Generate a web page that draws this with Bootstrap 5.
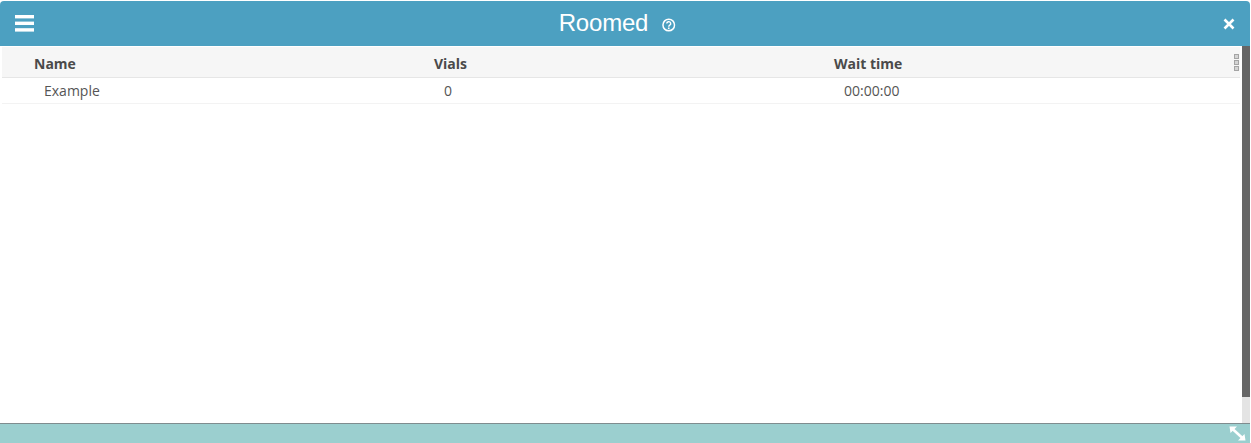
<!DOCTYPE html>
<html lang="en">
<head>
    <meta charset="UTF-8">
    <meta name="viewport" content="width=device-width, initial-scale=1.0">
    <title>Roomed</title>
    <link href="https://cdn.jsdelivr.net/npm/bootstrap@5.3.0/dist/css/bootstrap.min.css" rel="stylesheet">
    <style>
        html, body { height: 100%; overflow: hidden; background: #fff; }
        .win-frame { height: 443px; width: 1250px; }
        .win-head {
            height: 45px;
            margin-top: 1px;
            background: #4ca0c1;
            border-radius: 4px 4px 0 0;
            color: #fff;
            padding: 0 15px 0 15px;
        }
        .win-title {
            font-family: "Liberation Sans", Arial, sans-serif;
            font-size: 24px;
            letter-spacing: -0.2px;
            line-height: 44px;
        }
        .title-group { padding-right: 16px; gap: 13px; }
        .win-main { min-height: 0; }
        .grid-area { padding: 1px 2px 0 2px; font-family: "Open Sans", sans-serif; font-size: 14px; color: #444; }
        .grid-table { table-layout: fixed; width: 1238px; margin: 0; border-collapse: collapse; }
        .grid-table th {
            background: #f6f6f6;
            height: 30px;
            font-weight: 700;
            color: #4a4a4a;
            padding: 4px 0 0 32px;
            border-bottom: 1px solid #e6e6e6;
            position: relative;
        }
        .grid-table td {
            height: 26px;
            padding: 0 0 0 42px;
            color: #555;
            border-bottom: 1px solid #f3f3f3;
        }
        .grip-dots { position: absolute; right: 1px; top: 7px; display: flex; flex-direction: column; gap: 1px; }
        .grip-dots i { display: block; width: 5px; height: 5px; background: #d4d4d4; border: 1px solid #a4a4a4; }
        .scroll-rail { width: 8px; background: #e4e4e4; }
        .scroll-thumb { height: 351px; background: #666; }
        .win-foot {
            height: 20px;
            background: #9bcfcf;
            border-top: 1px solid #7f8c8f;
            padding-right: 4px;
        }
    </style>
</head>
<body>
    <div class="win-frame d-flex flex-column">
        <div class="win-head d-flex align-items-center justify-content-between position-relative">
            <svg width="19" height="17" viewBox="0 0 19 17" aria-hidden="true">
                <rect x="0" y="0" width="19" height="3.4" fill="#fff"/>
                <rect x="0" y="6.6" width="19" height="3.4" fill="#fff"/>
                <rect x="0" y="13.2" width="19" height="3.4" fill="#fff"/>
            </svg>
            <div class="title-group position-absolute top-0 start-50 translate-middle-x d-flex align-items-center">
                <span class="win-title">Roomed</span>
                <svg width="14" height="14" viewBox="0 0 14 14" aria-hidden="true" class="mt-1">
                    <circle cx="7" cy="7" r="5.8" fill="none" stroke="#fff" stroke-width="1.5"/>
                    <path d="M5 5.6a2 1.9 0 1 1 3 1.6c-.7.4-1 .7-1 1.5" fill="none" stroke="#fff" stroke-width="1.4"/>
                    <rect x="6.2" y="9.5" width="1.6" height="1.6" fill="#fff"/>
                </svg>
            </div>
            <svg width="12" height="12" viewBox="0 0 12 12" aria-hidden="true">
                <path d="M1.5 1.5l9 9M10.5 1.5l-9 9" stroke="#fff" stroke-width="2.6" fill="none"/>
            </svg>
        </div>
        <div class="win-main flex-grow-1 d-flex">
            <div class="grid-area flex-grow-1">
                <table class="grid-table">
                    <colgroup><col width="400"><col width="400"><col></colgroup>
                    <thead>
                        <tr>
                            <th>Name</th>
                            <th>Vials</th>
                            <th>Wait time<span class="grip-dots"><i></i><i></i><i></i></span></th>
                        </tr>
                    </thead>
                    <tbody>
                        <tr>
                            <td>Example</td>
                            <td>0</td>
                            <td>00:00:00</td>
                        </tr>
                    </tbody>
                </table>
            </div>
            <div class="scroll-rail flex-shrink-0"><div class="scroll-thumb"></div></div>
        </div>
        <div class="win-foot d-flex align-items-center justify-content-end">
            <svg width="17" height="15" viewBox="0 0 17 15" aria-hidden="true">
                <path d="M3 2.5l11 10" stroke="#fff" stroke-width="2.6" fill="none"/>
                <path d="M0.5 0.5h7.5l-6.5 6.5zM16.5 14.5h-7.5l6.5-6.5z" fill="#fff"/>
            </svg>
        </div>
    </div>
    <script src="https://cdn.jsdelivr.net/npm/bootstrap@5.3.0/dist/js/bootstrap.bundle.min.js"></script>
</body>
</html>
